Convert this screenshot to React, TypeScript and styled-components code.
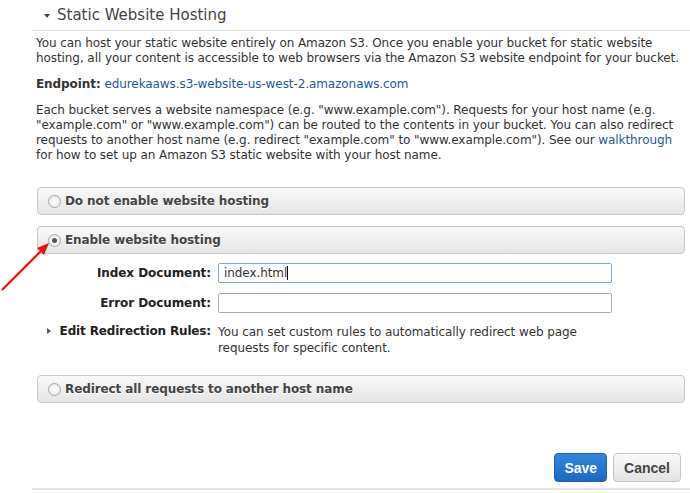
import React from "react";
import styled, { createGlobalStyle } from "styled-components";

const GlobalStyle = createGlobalStyle`
  body {
    margin: 0;
    background: #fff;
    font-family: "DejaVu Sans", Verdana, sans-serif;
  }
`;

const Page = styled.div`
  position: relative;
  width: 690px;
  height: 493px;
  overflow: hidden;
  background: #fff;
`;

const Section = styled.div`
  margin-left: 32px;
`;

const Header = styled.div`
  height: 30px;
  display: flex;
  align-items: center;
  padding-left: 12px;
  border-bottom: 1px solid #dedede;
  color: #444;
  font-size: 15px;
`;

const Caret = styled.span`
  display: inline-block;
  width: 0;
  height: 0;
  border-left: 3px solid transparent;
  border-right: 3px solid transparent;
  border-top: 4px solid #444;
  margin-right: 7px;
  margin-top: 1px;
`;

const Body = styled.div`
  padding: 5px 0 0 4px;
  font-size: 12px;
  letter-spacing: -0.08px;
  line-height: 15px;
  color: #333;
`;

const Para = styled.p`
  margin: 0 0 11px;
`;

const Link = styled.a`
  color: #2358a0;
  text-decoration: none;
`;

const Option = styled.div<{ $top: number }>`
  margin: ${(p) => p.$top}px 5px 0 5px;
  height: 26px;
  border: 1px solid #c9c9c9;
  border-radius: 4px;
  background: linear-gradient(#f9f9f9, #e5e5e5);
  display: flex;
  align-items: center;
  padding-left: 10px;
  font-size: 12px;
  letter-spacing: -0.1px;
  font-weight: bold;
  color: #444;
  text-shadow: 0 1px 0 #fff;
`;

const Radio = styled.span<{ $checked?: boolean }>`
  width: 11px;
  height: 11px;
  border-radius: 50%;
  border: 1px solid #a8a8a8;
  background: radial-gradient(#fff, #e4e4e4);
  margin-right: 4px;
  display: flex;
  align-items: center;
  justify-content: center;
  &::after {
    content: "";
    width: 5px;
    height: 5px;
    border-radius: 50%;
    background: ${(p) => (p.$checked ? "#555" : "transparent")};
  }
`;

const Form = styled.div`
  display: grid;
  grid-template-columns: 179px 394px;
  column-gap: 7px;
  row-gap: 10px;
  margin-top: 9px;
  font-size: 12px;
  letter-spacing: -0.08px;
  color: #333;
`;

const Label = styled.label`
  font-weight: bold;
  font-size: 12px;
  text-align: right;
  align-self: center;
  color: #222;
`;

const Input = styled.div<{ $focus?: boolean }>`
  height: 18px;
  border: 1px solid ${(p) => (p.$focus ? "#80a6e6" : "#ababab")};
  border-radius: 2px;
  background: #fff;
  font-size: 12px;
  line-height: 18px;
  padding-left: 5px;
  color: #333;
`;

const Cursor = styled.span`
  display: inline-block;
  width: 1px;
  height: 14px;
  background: #000;
  vertical-align: -3px;
`;

const RuleLabel = styled(Label)`
  display: flex;
  justify-content: space-between;
  align-items: center;
  align-self: start;
  padding-left: 15px;
  margin-top: 1px;
  letter-spacing: -0.15px;
`;

const SmallCaret = styled.span`
  width: 0;
  height: 0;
  border-top: 3px solid transparent;
  border-bottom: 3px solid transparent;
  border-left: 4px solid #555;
`;

const RuleText = styled.div`
  line-height: 16px;
  margin-top: 1px;
  color: #333;
`;

const Buttons = styled.div`
  display: flex;
  justify-content: flex-end;
  gap: 6px;
  margin: 50px 9px 0 0;
`;

const Button = styled.button<{ $primary?: boolean }>`
  height: 29px;
  padding: 0 ${(p) => (p.$primary ? 9 : 10)}px;
  border-radius: 4px;
  font-family: "Liberation Sans", Arial, sans-serif;
  font-size: 14px;
  font-weight: bold;
  border: 1px solid ${(p) => (p.$primary ? "#1a5fb0" : "#c6c6c6")};
  color: ${(p) => (p.$primary ? "#fff" : "#444")};
  background: ${(p) =>
    p.$primary
      ? "linear-gradient(#3385da, #1c68c2)"
      : "linear-gradient(#f9f9f9, #e3e3e3)"};
`;

const BottomRule = styled.div`
  margin-top: 6px;
  height: 2px;
  background: #e2e2e2;
`;

const Arrow = styled.svg`
  position: absolute;
  left: 0;
  top: 238px;
`;

export default function App() {
  return (
    <Page>
      <GlobalStyle />
      <Section>
        <Header>
          <Caret />
          Static Website Hosting
        </Header>
        <Body>
          <Para>
            You can host your static website entirely on Amazon S3. Once you enable your bucket for static website
            hosting, all your content is accessible to web browsers via the Amazon S3 website endpoint for your bucket.
          </Para>
          <Para>
            <b>Endpoint:</b> <Link>edurekaaws.s3-website-us-west-2.amazonaws.com</Link>
          </Para>
          <Para>
            Each bucket serves a website namespace (e.g. "www.example.com"). Requests for your host name (e.g.
            "example.com" or "www.example.com") can be routed to the contents in your bucket. You can also redirect
            requests to another host name (e.g. redirect "example.com" to "www.example.com"). See our{" "}
            <Link>walkthrough</Link> for how to set up an Amazon S3 static website with your host name.
          </Para>
        </Body>
        <Option $top={24}>
          <Radio />
          Do not enable website hosting
        </Option>
        <Option $top={11}>
          <Radio $checked />
          Enable website hosting
        </Option>
        <Form>
          <Label>Index Document:</Label>
          <Input $focus>
            index.html
            <Cursor />
          </Input>
          <Label>Error Document:</Label>
          <Input />
          <RuleLabel>
            <SmallCaret />
            Edit Redirection Rules:
          </RuleLabel>
          <RuleText>
            You can set custom rules to automatically redirect web page
            <br />
            requests for specific content.
          </RuleText>
        </Form>
        <Option $top={19}>
          <Radio />
          Redirect all requests to another host name
        </Option>
        <Buttons>
          <Button $primary>Save</Button>
          <Button>Cancel</Button>
        </Buttons>
        <BottomRule />
      </Section>
      <Arrow width="60" height="60" viewBox="0 0 60 60">
        <line x1="2" y1="52" x2="42" y2="12" stroke="#ee1111" strokeWidth="2.2" />
        <polygon points="49,5 37,10 44,17" fill="#ee1111" />
      </Arrow>
    </Page>
  );
}
